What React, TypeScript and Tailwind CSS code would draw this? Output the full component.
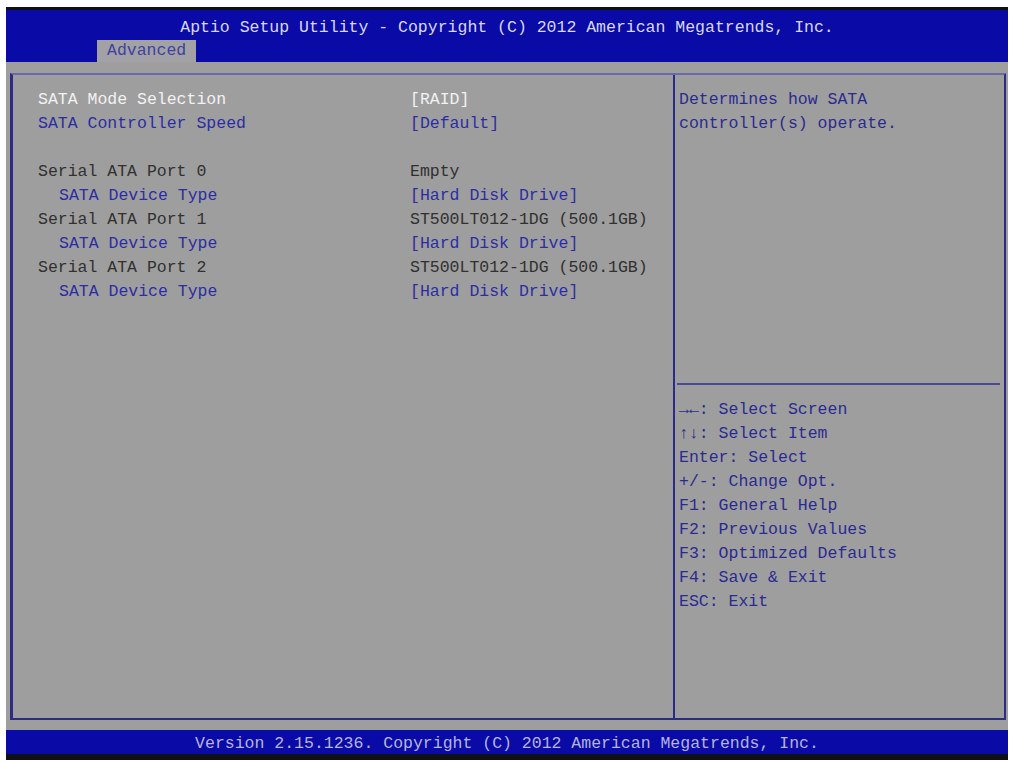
import React from "react";

const mono = { fontFamily: '"Liberation Mono", "DejaVu Sans Mono", monospace' };

type Row = { label: string; value?: string; kind: "sel" | "opt" | "info" | "blank"; indent?: boolean };

const rows: Row[] = [
  { label: "SATA Mode Selection", value: "[RAID]", kind: "sel" },
  { label: "SATA Controller Speed", value: "[Default]", kind: "opt" },
  { label: "", kind: "blank" },
  { label: "Serial ATA Port 0", value: "Empty", kind: "info" },
  { label: "SATA Device Type", value: "[Hard Disk Drive]", kind: "opt", indent: true },
  { label: "Serial ATA Port 1", value: "ST500LT012-1DG (500.1GB)", kind: "info" },
  { label: "SATA Device Type", value: "[Hard Disk Drive]", kind: "opt", indent: true },
  { label: "Serial ATA Port 2", value: "ST500LT012-1DG (500.1GB)", kind: "info" },
  { label: "SATA Device Type", value: "[Hard Disk Drive]", kind: "opt", indent: true },
];

const keys = [
  "→←: Select Screen",
  "↑↓: Select Item",
  "Enter: Select",
  "+/-: Change Opt.",
  "F1: General Help",
  "F2: Previous Values",
  "F3: Optimized Defaults",
  "F4: Save & Exit",
  "ESC: Exit",
];

function colorFor(kind: Row["kind"]) {
  if (kind === "sel") return "text-[#f2f2f2]";
  if (kind === "opt") return "text-[#2c2ca6]";
  return "text-[#303030]";
}

export default function App() {
  return (
    <div className="w-[1010px] h-[762px] bg-white pt-[7px] pl-[6px] pr-[2px] text-[16.5px] leading-[24px]" style={mono}>
      <div className="flex flex-col">
        <div className="h-[3px] bg-[#101018]" />
        {/* header */}
        <div className="h-[52px] bg-[#0a0aa6] flex flex-col">
          <div className="h-[31px] flex items-end justify-center text-[#d8d8f0] whitespace-pre">
            Aptio Setup Utility - Copyright (C) 2012 American Megatrends, Inc.
          </div>
          <div className="flex-1 flex items-end pl-[91px]">
            <div className="h-[22px] px-[10px] bg-[#a2a2a6] text-[#4040a0] leading-[22px]">Advanced</div>
          </div>
        </div>

        {/* body */}
        <div className="h-[668px] bg-[#9e9e9e] pl-[4px] pr-[2px] pt-[11px] pb-[10px]">
          <div className="h-full flex border-2 border-l-[3px] border-[#2c2c86] border-t-[#6a6aa6]">
            <div className="w-[660px] pl-[25px] pt-[13px]">
              {rows.map((r, i) =>
                r.kind === "blank" ? (
                  <div key={i} className="h-[24px]" />
                ) : (
                  <div key={i} className={`flex h-[24px] whitespace-pre ${colorFor(r.kind)}`}>
                    <div className={`w-[372px] ${r.indent ? "pl-[21px]" : ""}`}>{r.label}</div>
                    <div>{r.value}</div>
                  </div>
                )
              )}
            </div>
            <div className="w-[2px] bg-[#2c2c86]" />
            <div className="flex-1 flex flex-col text-[#2a2a92]">
              <div className="h-[308px] pl-[4px] pt-[13px]">
                <div>Determines how SATA</div>
                <div>controller(s) operate.</div>
              </div>
              <div className="h-[2px] ml-[2px] mr-[4px] bg-[#4a4a96]" />
              <div className="pl-[4px] pt-[13px] whitespace-pre">
                {keys.map((k) => (
                  <div key={k} className="h-[24px]">{k}</div>
                ))}
              </div>
            </div>
          </div>
        </div>

        {/* footer */}
        <div className="h-[24px] bg-[#0a0aa6] flex items-center justify-center pt-[4px] text-[#b4b4e0] whitespace-pre">
          Version 2.15.1236. Copyright (C) 2012 American Megatrends, Inc.
        </div>
        <div className="h-[6px] bg-[#101018]" />
      </div>
    </div>
  );
}
